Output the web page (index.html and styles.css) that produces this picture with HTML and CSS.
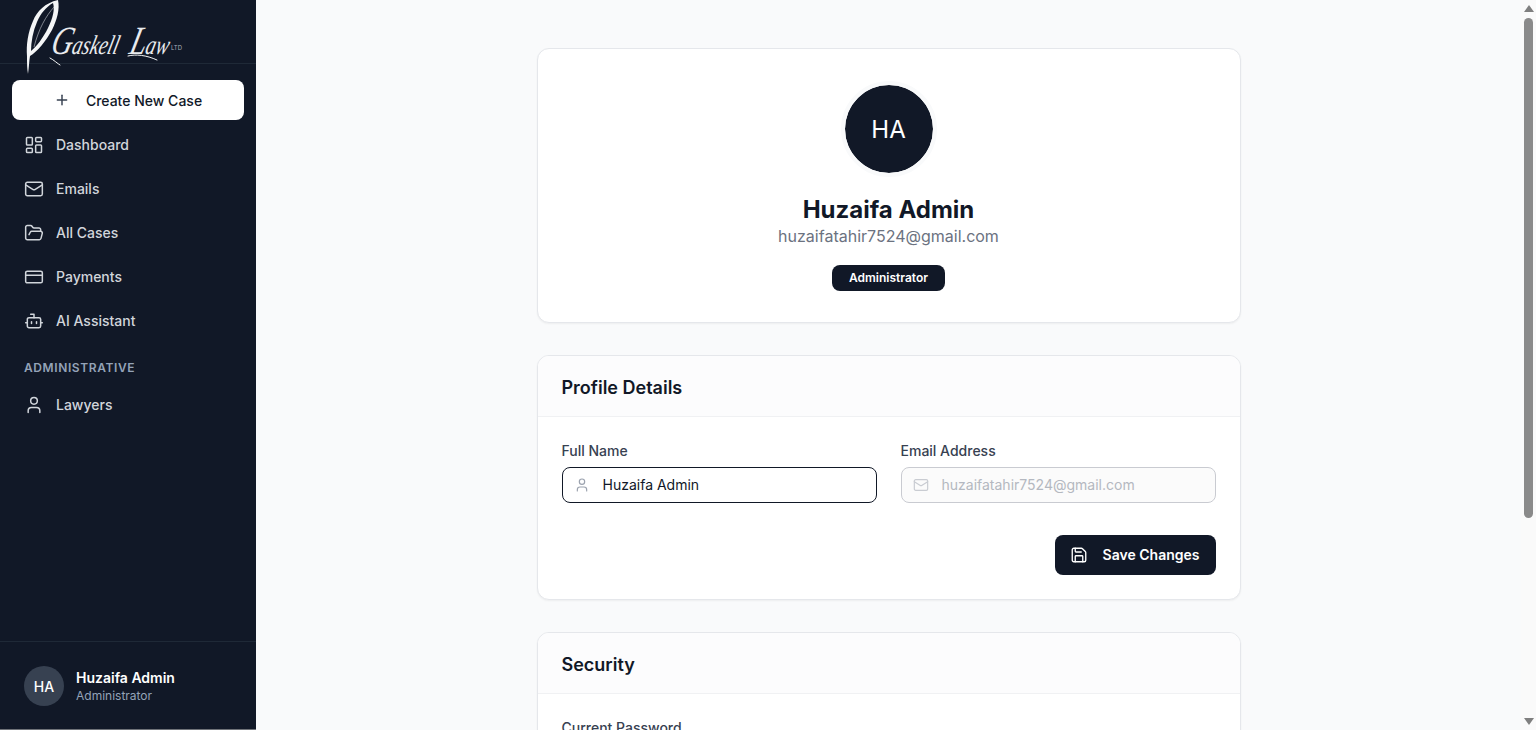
FILE: index.html
```html
<!DOCTYPE html>
<html lang="en">
<head>
    <meta charset="UTF-8">
    <meta name="viewport" content="width=device-width, initial-scale=1.0">
    <title>Profile - Gaskell Law</title>
    <link rel="stylesheet" href="styles.css">
</head>
<body>

    <aside class="sidebar">
        <div class="logo-bar">
            <svg class="logo" viewBox="0 0 200 80" width="200" height="80">
                <!-- feather -->
                <path class="feather" d="M58 0C45 3 37 11 33 21C28 32 26 45 27 56C27 63 27 69 28 74C29 67 29 62 30 56C37 52 46 41 52 30C57 20 60 9 58 0ZM53 3C55 9 53 18 48 28C43 38 37 46 31 51C31 42 33 31 37 22C41 13 46 7 53 3Z"/>
                <path class="quill" d="M54 7C46 16 39 28 34 47"/>
                <text class="logo-name" transform="skewX(-14)" x="63" y="54" textLength="118" lengthAdjust="spacingAndGlyphs"><tspan class="logo-cap">G</tspan>askell <tspan class="logo-cap">L</tspan>aw</text>
                <!-- swashes under the wordmark -->
                <path class="quill swash" d="M128 56C136 54 146 55 157 60"/>
                <path class="quill swash" d="M50 58C54 60 58 64 60 65"/>
                <text class="logo-ltd" x="171" y="50" textLength="11" lengthAdjust="spacingAndGlyphs">LTD</text>
            </svg>
        </div>

        <a class="create-btn" href="#">
            <svg class="icon icon-plus" viewBox="0 0 24 24"><path d="M5 12h14"/><path d="M12 5v14"/></svg>
            Create New Case
        </a>

        <nav class="nav">
            <a class="nav-item" href="#">
                <svg class="icon" viewBox="0 0 24 24"><rect width="7" height="9" x="3" y="3" rx="1"/><rect width="7" height="5" x="14" y="3" rx="1"/><rect width="7" height="9" x="14" y="12" rx="1"/><rect width="7" height="5" x="3" y="16" rx="1"/></svg>
                Dashboard
            </a>
            <a class="nav-item" href="#">
                <svg class="icon" viewBox="0 0 24 24"><rect width="20" height="16" x="2" y="4" rx="2"/><path d="m22 7-8.97 5.7a1.94 1.94 0 0 1-2.06 0L2 7"/></svg>
                Emails
            </a>
            <a class="nav-item" href="#">
                <svg class="icon" viewBox="0 0 24 24"><path d="m6 14 1.5-2.9A2 2 0 0 1 9.24 10H20a2 2 0 0 1 1.94 2.5l-1.54 6a2 2 0 0 1-1.95 1.5H4a2 2 0 0 1-2-2V5a2 2 0 0 1 2-2h3.9a2 2 0 0 1 1.69.9l.81 1.2a2 2 0 0 0 1.67.9H18a2 2 0 0 1 2 2v2"/></svg>
                All Cases
            </a>
            <a class="nav-item" href="#">
                <svg class="icon" viewBox="0 0 24 24"><rect width="20" height="14" x="2" y="5" rx="2"/><line x1="2" x2="22" y1="10" y2="10"/></svg>
                Payments
            </a>
            <a class="nav-item" href="#">
                <svg class="icon" viewBox="0 0 24 24"><path d="M12 8V4H8"/><rect width="16" height="12" x="4" y="8" rx="2"/><path d="M2 14h2"/><path d="M20 14h2"/><path d="M15 13v2"/><path d="M9 13v2"/></svg>
                AI Assistant
            </a>

            <p class="nav-label">ADMINISTRATIVE</p>

            <a class="nav-item" href="#">
                <svg class="icon" viewBox="0 0 24 24"><path d="M19 21v-2a4 4 0 0 0-4-4H9a4 4 0 0 0-4 4v2"/><circle cx="12" cy="7" r="4"/></svg>
                Lawyers
            </a>
        </nav>

        <div class="user-box">
            <div class="user-avatar">HA</div>
            <div>
                <div class="user-name">Huzaifa Admin</div>
                <div class="user-role">Administrator</div>
            </div>
        </div>
    </aside>

    <main class="main">
        <div class="content">

            <section class="card profile-card">
                <div class="profile-avatar">HA</div>
                <h1 class="profile-name">Huzaifa Admin</h1>
                <p class="profile-email">huzaifatahir7524@gmail.com</p>
                <span class="badge">Administrator</span>
            </section>

            <section class="card">
                <h2 class="card-title">Profile Details</h2>
                <div class="card-body">
                    <div class="field-row">
                        <div class="field">
                            <label for="fullName">Full Name</label>
                            <div class="input-box input-active">
                                <svg class="icon icon-input" viewBox="0 0 24 24"><path d="M19 21v-2a4 4 0 0 0-4-4H9a4 4 0 0 0-4 4v2"/><circle cx="12" cy="7" r="4"/></svg>
                                <input type="text" id="fullName" value="Huzaifa Admin">
                            </div>
                        </div>
                        <div class="field">
                            <label for="emailAddress">Email Address</label>
                            <div class="input-box input-disabled">
                                <svg class="icon icon-input" viewBox="0 0 24 24"><rect width="20" height="16" x="2" y="4" rx="2"/><path d="m22 7-8.97 5.7a1.94 1.94 0 0 1-2.06 0L2 7"/></svg>
                                <input type="email" id="emailAddress" value="huzaifatahir7524@gmail.com" disabled>
                            </div>
                        </div>
                    </div>
                    <div class="actions">
                        <button class="save-btn">
                            <svg class="icon icon-save" viewBox="0 0 24 24"><path d="M15.2 3a2 2 0 0 1 1.4.6l3.8 3.8a2 2 0 0 1 .6 1.4V19a2 2 0 0 1-2 2H5a2 2 0 0 1-2-2V5a2 2 0 0 1 2-2z"/><path d="M17 21v-7a1 1 0 0 0-1-1H8a1 1 0 0 0-1 1v7"/><path d="M7 3v4a1 1 0 0 0 1 1h7"/></svg>
                            Save Changes
                        </button>
                    </div>
                </div>
            </section>

            <section class="card">
                <h2 class="card-title">Security</h2>
                <div class="card-body">
                    <div class="field">
                        <label for="currentPassword">Current Password</label>
                    </div>
                </div>
            </section>

        </div>
    </main>

    <!-- page scrollbar, drawn since the headless browser hides the real one -->
    <div class="scroll-rail">
        <span class="scroll-up"></span>
        <span class="scroll-thumb"></span>
        <span class="scroll-down"></span>
    </div>

</body>
</html>
```

FILE: styles.css
```css
:root {
    --navy: #111827; --white: #FFFFFF; --page: #f9fafb;
    --line: #e5e7eb; --text-medium: #374151; --text-light: #6b7280;
    --slate: #94a3b8;
}
* { box-sizing: border-box; }
html, body { height: 100%; }
body {
    font-family: 'Inter', 'Liberation Sans', sans-serif; margin: 0;
    display: flex; overflow: hidden;
    background-color: var(--page); color: var(--navy);
}
a { text-decoration: none; }

.icon {
    width: 20px; height: 20px; flex-shrink: 0; fill: none;
    stroke: currentColor; stroke-width: 1.8; stroke-linecap: round; stroke-linejoin: round;
}

/* Sidebar */
.sidebar {
    width: 256px; flex-shrink: 0; height: 100%;
    display: flex; flex-direction: column;
    background-color: var(--navy); color: #d1d5db;
    border-bottom: 1px solid #6f7278;
}
.logo-bar {
    height: 64px; flex-shrink: 0; position: relative;
    border-bottom: 1px solid #1f2937;
}
.logo { position: absolute; left: 0; top: 0; overflow: visible; }
.feather { fill: #f5f6f7; fill-rule: evenodd; }
.quill { fill: none; stroke: #c9ccd1; stroke-width: 0.6; }
.swash { stroke: #f5f6f7; stroke-width: 1; stroke-linecap: round; }
.logo-name {
    font-family: 'Liberation Serif', serif; font-style: italic; font-size: 27px;
    word-spacing: 8px; fill: #e9ebee;
}
.logo-cap { font-size: 40px; }
.logo-ltd { font-family: 'Inter', sans-serif; font-size: 6px; fill: #aab0ba; }

.create-btn {
    display: flex; align-items: center; justify-content: center; gap: 16px;
    height: 40px; margin: 16px 12px 5px;
    background-color: var(--white); border-radius: 8px;
    color: var(--navy); font-size: 14px; font-weight: 500;
}
.icon-plus { width: 16px; height: 16px; color: #374151; stroke-width: 2.2; }

.nav { display: flex; flex-direction: column; gap: 4px; padding: 0 12px; flex: 1; }
.nav-item {
    display: flex; align-items: center; gap: 12px;
    height: 40px; padding: 0 12px; border-radius: 8px;
    color: #d1d5db; font-size: 14px; line-height: 20px; font-weight: 500;
}
.nav-label {
    margin: 15px 0 5px; padding: 0 12px;
    font-size: 12px; line-height: 16px; font-weight: 600; letter-spacing: 0.6px;
    color: var(--slate);
}

.user-box {
    display: flex; align-items: center; gap: 12px;
    padding: 24px 24px 23px; border-top: 1px solid #1f2937;
}
.user-avatar {
    width: 40px; height: 40px; border-radius: 50%;
    display: flex; align-items: center; justify-content: center;
    background-color: #374151; color: var(--white); font-size: 14px; font-weight: 500;
}
.user-name { font-size: 14px; line-height: 20px; font-weight: 600; color: var(--white); }
.user-role { font-size: 12px; line-height: 16px; color: var(--slate); }

/* Main area */
.main { flex: 1; height: 100%; overflow: hidden; }

.scroll-rail {
    width: 15px; flex-shrink: 0; height: 100%;
    display: flex; flex-direction: column; align-items: center;
    background-color: #fafafa;
}
.scroll-up, .scroll-down {
    width: 0; height: 0; flex-shrink: 0;
    border-left: 5.5px solid transparent; border-right: 5.5px solid transparent;
}
.scroll-up { margin-top: 5px; border-bottom: 7px solid #7f7f7f; }
.scroll-down { margin-top: auto; margin-bottom: 5px; border-top: 7px solid #7f7f7f; }
.scroll-thumb {
    width: 9px; height: 500px; margin-top: 6px;
    background-color: #8a8a8a; border-radius: 5px;
}

.content {
    width: 704px; margin: 0 auto; padding: 48px 0;
    display: flex; flex-direction: column; gap: 32px;
}
.card {
    background-color: var(--white); border: 1px solid var(--line);
    border-radius: 12px; box-shadow: 0 1px 2px rgba(0,0,0,0.05); overflow: hidden;
}

.profile-card {
    display: flex; flex-direction: column; align-items: center;
    padding: 32px 32px 31px;
}
.profile-avatar {
    width: 96px; height: 96px; border-radius: 50%;
    border: 4px solid var(--page); background-clip: padding-box;
    display: flex; align-items: center; justify-content: center;
    background-color: var(--navy); color: var(--white); font-size: 24px; font-weight: 400;
}
.profile-name { margin: 19px 0 0; font-size: 24px; line-height: 28px; font-weight: 700; }
.profile-email { margin: 0; font-size: 16px; line-height: 24px; color: var(--text-light); }
.badge {
    margin-top: 17px; padding: 5px 17px; border-radius: 8px;
    background-color: var(--navy); color: var(--white);
    font-size: 12px; line-height: 16px; font-weight: 600;
}

.card-title {
    margin: 0; padding: 18px 24px 14px;
    background-color: #fcfcfd; border-bottom: 1px solid #f0f1f3;
    font-size: 18px; line-height: 28px; font-weight: 600;
}
.card-body { padding: 24px; }

.field-row { display: grid; grid-template-columns: 1fr 1fr; gap: 24px; }
.field { display: flex; flex-direction: column; gap: 6px; }
.field label { font-size: 14px; line-height: 20px; font-weight: 500; color: var(--text-medium); }
.input-box {
    display: flex; align-items: center; gap: 13px;
    height: 36px; padding: 0 12px 0 11px;
    background-color: var(--white); border: 1px solid #d1d5db; border-radius: 8px;
}
.input-box input {
    flex: 1; min-width: 0; border: none; outline: none; padding: 0; background: transparent;
    font-family: inherit; font-size: 14px; line-height: 20px; height: 20px; color: var(--navy);
}
.input-active { border-color: var(--navy); }
.input-disabled { background-color: #fbfbfb; border-color: #c9cbd1; }
.input-disabled input { color: #b4b8c0; }
.icon-input { width: 16px; height: 16px; color: #9ca3af; }
.input-disabled .icon-input { color: #c9ccd2; }

.actions { display: flex; justify-content: flex-end; margin-top: 32px; }
.save-btn {
    display: flex; align-items: center; gap: 15px;
    height: 40px; padding: 0 16px 0 15px;
    background-color: var(--navy); color: var(--white); border: none; border-radius: 8px;
    font-family: inherit; font-size: 14px; line-height: 20px; font-weight: 600; cursor: pointer;
}
.icon-save { width: 18px; height: 18px; }
```
